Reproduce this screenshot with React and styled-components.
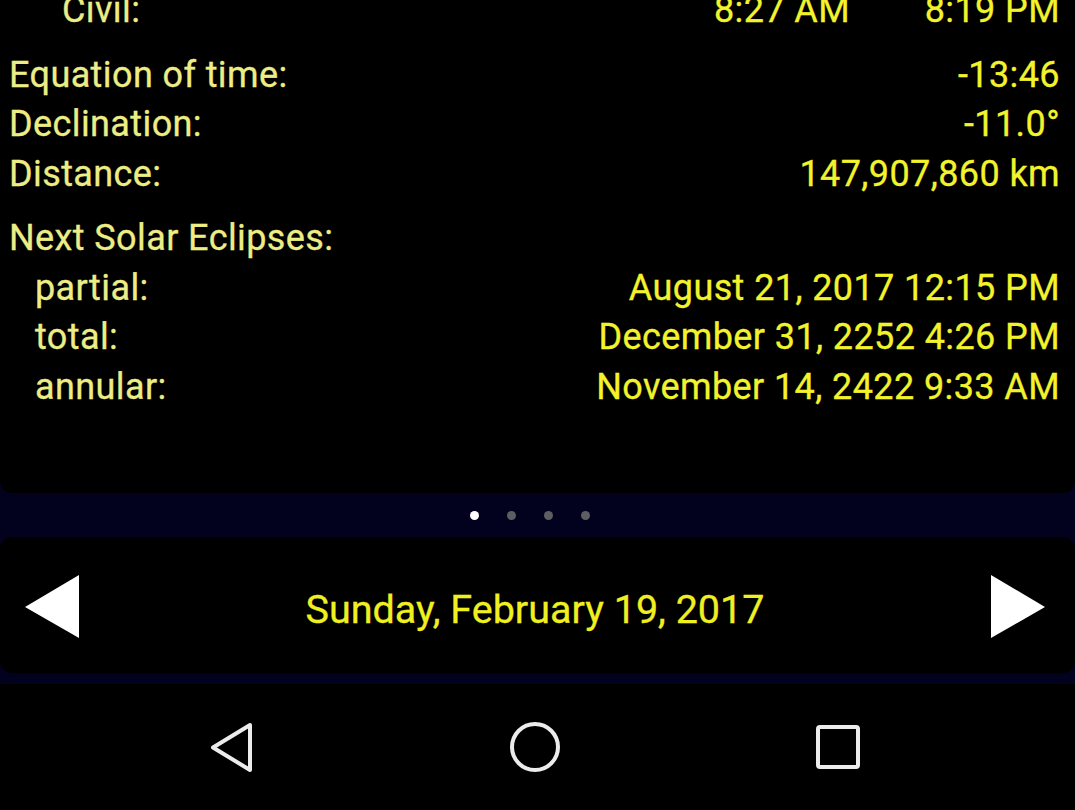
import React from "react";
import styled, { createGlobalStyle } from "styled-components";

const Global = createGlobalStyle`
  html, body { margin: 0; padding: 0; background: #02021e; }
  body { font-family: Roboto, "Noto Sans", "Liberation Sans", sans-serif; }
`;

const Screen = styled.div`
  width: 1075px;
  height: 810px;
  overflow: hidden;
  background: #02021e;
  display: flex;
  flex-direction: column;
`;

const InfoPanel = styled.div`
  background: #000;
  border-radius: 0 0 12px 12px;
  height: 493px;
  flex-shrink: 0;
  overflow: hidden;
  padding: 0 15px 0 9px;
  box-sizing: border-box;
`;

const Scroller = styled.div`
  margin-top: -14px;
  display: flex;
  flex-direction: column;
  gap: 15px;
`;

const Section = styled.div`
  display: flex;
  flex-direction: column;
`;

const Row = styled.div`
  display: flex;
  align-items: baseline;
  font-size: 36px;
  letter-spacing: 0.4px;
  line-height: 49.5px;
  white-space: nowrap;
  -webkit-text-stroke: 0.3px currentColor;
`;

const Label = styled.span`
  color: #eded86;
  padding-left: ${(p) => p.$indent || 0}px;
  flex: 1;
`;

const Value = styled.span`
  color: #f3f32c;
  text-align: right;
  width: ${(p) => (p.$w ? `${p.$w}px` : "auto")};
`;

const Dots = styled.div`
  height: 44px;
  flex-shrink: 0;
  display: flex;
  align-items: center;
  justify-content: center;
  gap: 28px;
  padding-right: 16px;
`;

const Dot = styled.span`
  width: 9px;
  height: 9px;
  border-radius: 50%;
  background: ${(p) => (p.$active ? "#ffffff" : "#5e5e62")};
`;

const DatePanel = styled.div`
  background: #000;
  border-radius: 12px;
  height: 136px;
  flex-shrink: 0;
  display: flex;
  align-items: center;
  justify-content: space-between;
  padding: 0 30px 0 25px;
  box-sizing: border-box;
`;

const ArrowBtn = styled.button`
  background: none;
  border: 0;
  padding: 0;
  width: 54px;
  height: 63px;
  display: flex;
  margin-top: 3px;
`;

const DateText = styled.div`
  color: #f0f020;
  font-size: 39.5px;
  margin-top: 9px;
  -webkit-text-stroke: 0.3px currentColor;
`;

const NavBar = styled.div`
  margin-top: 11px;
  flex: 1;
  background: #000;
  display: flex;
  align-items: center;
  justify-content: center;
  padding-right: 6px;
`;

const NavSlot = styled.div`
  width: 303px;
  display: flex;
  justify-content: center;
`;

const NavIcon = styled.svg`
  display: block;
`;

const Left = () => (
  <svg width="54" height="63" viewBox="0 0 54 63">
    <polygon points="54,0 54,63 0,32" fill="#fff" />
  </svg>
);

const RightA = () => (
  <svg width="54" height="63" viewBox="0 0 54 63">
    <polygon points="0,0 0,63 54,32" fill="#fff" />
  </svg>
);

export default function App() {
  return (
    <>
      <Global />
      <Screen>
        <InfoPanel>
          <Scroller>
            <Section>
              <Row>
                <Label $indent={53}>Civil:</Label>
                <Value>8:27 AM</Value>
                <Value $w={210}>8:19 PM</Value>
              </Row>
            </Section>
            <Section>
              <Row>
                <Label>Equation of time:</Label>
                <Value>-13:46</Value>
              </Row>
              <Row>
                <Label>Declination:</Label>
                <Value>-11.0°</Value>
              </Row>
              <Row>
                <Label>Distance:</Label>
                <Value>147,907,860 km</Value>
              </Row>
            </Section>
            <Section>
              <Row>
                <Label>Next Solar Eclipses:</Label>
              </Row>
              <Row>
                <Label $indent={26}>partial:</Label>
                <Value>August 21, 2017 12:15 PM</Value>
              </Row>
              <Row>
                <Label $indent={26}>total:</Label>
                <Value>December 31, 2252 4:26 PM</Value>
              </Row>
              <Row>
                <Label $indent={26}>annular:</Label>
                <Value>November 14, 2422 9:33 AM</Value>
              </Row>
            </Section>
          </Scroller>
        </InfoPanel>
        <Dots>
          <Dot $active />
          <Dot />
          <Dot />
          <Dot />
        </Dots>
        <DatePanel>
          <ArrowBtn aria-label="previous day">
            <Left />
          </ArrowBtn>
          <DateText>Sunday, February 19, 2017</DateText>
          <ArrowBtn aria-label="next day">
            <RightA />
          </ArrowBtn>
        </DatePanel>
        <NavBar>
          <NavSlot>
            <NavIcon width="48" height="54" viewBox="0 0 48 54">
              <path d="M42 5 L42 50 L5 27.5 Z" fill="none" stroke="#ececec" strokeWidth="4" strokeLinejoin="round" />
            </NavIcon>
          </NavSlot>
          <NavSlot>
            <NavIcon width="54" height="54" viewBox="0 0 54 54">
              <circle cx="27" cy="27" r="23" fill="none" stroke="#ececec" strokeWidth="4" />
            </NavIcon>
          </NavSlot>
          <NavSlot>
            <NavIcon width="46" height="46" viewBox="0 0 46 46">
              <rect x="3" y="3" width="40" height="40" rx="2" fill="none" stroke="#ececec" strokeWidth="4" />
            </NavIcon>
          </NavSlot>
        </NavBar>
      </Screen>
    </>
  );
}
